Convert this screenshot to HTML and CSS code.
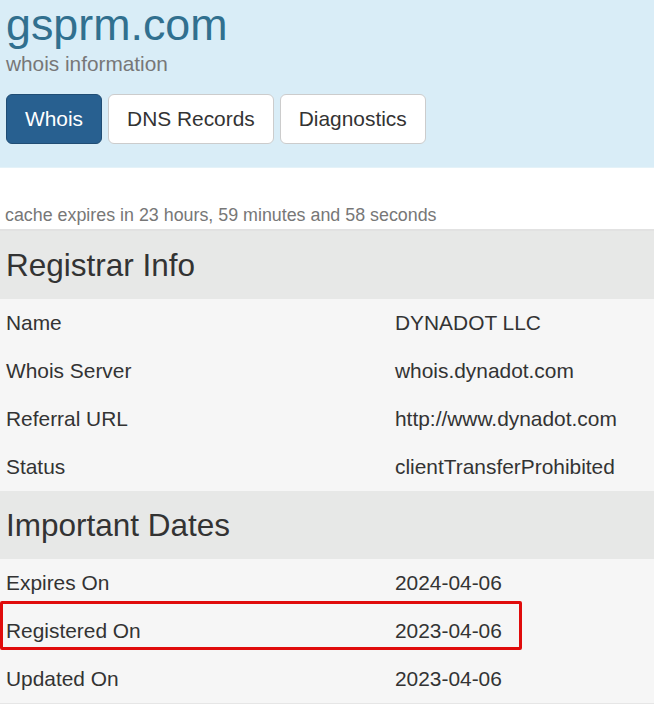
FILE: index.html
```html
<!DOCTYPE html>
<html>
<head>
<meta charset="utf-8">
<link rel="stylesheet" href="styles.css">
</head>
<body>
<header class="jumbo">
  <h1 class="title">gsprm.com</h1>
  <div class="subtitle">whois information</div>
  <nav class="tabs">
    <span class="btn btn-primary">Whois</span>
    <span class="btn">DNS Records</span>
    <span class="btn">Diagnostics</span>
  </nav>
</header>
<div class="cache">cache expires in 23 hours, 59 minutes and 58 seconds</div>
<section class="table">
  <div class="head">Registrar Info</div>
  <div class="row"><span class="k">Name</span><span class="v">DYNADOT LLC</span></div>
  <div class="row"><span class="k">Whois Server</span><span class="v">whois.dynadot.com</span></div>
  <div class="row"><span class="k">Referral URL</span><span class="v">http://www.dynadot.com</span></div>
  <div class="row"><span class="k">Status</span><span class="v">clientTransferProhibited</span></div>
  <div class="head">Important Dates</div>
  <div class="row"><span class="k">Expires On</span><span class="v">2024-04-06</span></div>
  <div class="row highlight"><span class="k">Registered On</span><span class="v">2023-04-06</span><span class="mark"></span></div>
  <div class="row last"><span class="k">Updated On</span><span class="v">2023-04-06</span></div>
</section>
</body>
</html>
```
FILE: styles.css
```css
html, body {
  margin: 0;
  padding: 0;
  background: #fff;
  font-family: "Liberation Sans", Arial, sans-serif;
  color: #333;
  width: 654px;
  overflow: hidden;
}
.jumbo {
  background: #d9edf7;
  border-bottom: 1px solid #e4f2f8;
  padding: 0 6px 23px;
  height: 144px;
}
.title {
  margin: 0;
  font-weight: normal;
  font-size: 44.8px;
  line-height: 49px;
  color: #31708f;
}
.subtitle {
  margin-top: 2px;
  font-size: 20.8px;
  line-height: 25px;
  color: #777;
}
.tabs {
  display: flex;
  gap: 6px;
  margin-top: 18px;
}
.btn {
  display: inline-flex;
  align-items: center;
  height: 48px;
  padding: 0 18px;
  border: 1px solid #ccc;
  border-radius: 6px;
  background: #fff;
  font-size: 20.9px;
  color: #333;
}
.btn-primary {
  background: #286090;
  border-color: #204d74;
  color: #fff;
}
.cache {
  margin-top: 35px;
  padding: 0 5px;
  font-size: 17.85px;
  line-height: 24px;
  color: #777;
  border-bottom: 2px solid #e2e2e2;
  padding-bottom: 2px;
}
.table {
  display: flex;
  flex-direction: column;
}
.head {
  background: #e7e8e7;
  height: 68px;
  display: flex;
  align-items: center;
  padding: 0 6px;
  font-size: 31.5px;
  color: #333;
}
.row {
  position: relative;
  display: grid;
  grid-template-columns: 389px 1fr;
  align-items: center;
  height: 48px;
  padding: 0 6px;
  background: #f6f6f6;
  font-size: 20.9px;
}
.row.last {
  border-bottom: 2px solid #e6e6e6;
}
.mark {
  position: absolute;
  left: 0;
  top: -6px;
  width: 516px;
  height: 43px;
  border: 3px solid #e00c0c;
  border-radius: 2px;
}
```
